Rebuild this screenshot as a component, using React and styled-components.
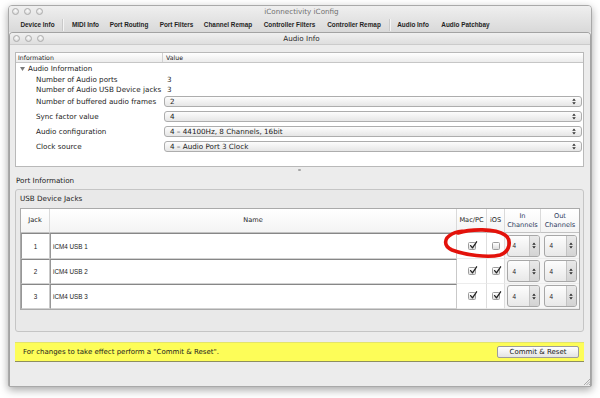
import React from 'react';
import styled, { createGlobalStyle } from 'styled-components';

const Global = createGlobalStyle`
  html, body { margin: 0; padding: 0; background: #fff; }
  body { font-family: "DejaVu Sans", "Liberation Sans", sans-serif; color: #1c1c1c; }
  * { box-sizing: border-box; }
`;

const Page = styled.div`
  position: relative;
  width: 600px;
  height: 398px;
  padding: 5px 8px 0 8px;
  background: #fff;
  overflow: hidden;
`;

const Window = styled.div`
  position: relative;
  width: 584px;
  height: 382px;
  display: flex;
  flex-direction: column;
  background: #ececec;
  border: 1px solid #a9a9a9;
  border-radius: 4px 4px 2px 2px;
  box-shadow: 0 3px 8px rgba(0, 0, 0, 0.35);
`;

const Chrome = styled.div`
  background: linear-gradient(#efefef, #d9d9d9);
  border-radius: 3px 3px 0 0;
`;

const TitleBar = styled.div`
  display: grid;
  grid-template-columns: 1fr auto 1fr;
  align-items: center;
  height: ${(p) => p.$h}px;
  padding-left: 3px;
`;

const Lights = styled.div`
  display: flex;
  gap: 5px;
`;

const Light = styled.span`
  width: 7px;
  height: 7px;
  border-radius: 50%;
  border: 1px solid #acacac;
  background: radial-gradient(circle at 50% 35%, #fbfbfb, #d2d2d2);
`;

const Title = styled.div`
  font-size: 7.2px;
  color: ${(p) => (p.$active ? '#2a2a2a' : '#707070')};
  white-space: nowrap;
`;

const TabBar = styled.div`
  display: flex;
  align-items: center;
  height: 15px;
  padding-left: 4px;
  font-family: "Liberation Sans", Arial, sans-serif;
  font-weight: bold;
  font-size: 6.4px;
  color: #1f1f1f;
`;

const Tab = styled.div`
  width: ${(p) => p.$w}px;
  flex: none;
  text-align: center;
  white-space: nowrap;
`;

const TabSep = styled.div`
  width: 1px;
  height: 12px;
  margin-left: ${(p) => p.$ml || 0}px;
  background: #c9c9c9;
  box-shadow: 1px 0 0 #f4f4f4;
`;

const InnerWindow = styled.div`
  flex: 1;
  display: flex;
  flex-direction: column;
  border: 1px solid #a3a3a3;
  border-bottom: none;
  border-radius: 4px 4px 0 0;
  background: #ececec;
`;

const InnerTitle = styled.div`
  background: linear-gradient(#f0f0f0, #dedede);
  border-bottom: 1px solid #cbcbcb;
  border-radius: 3px 3px 0 0;
`;

const Content = styled.div`
  flex: 1;
  display: flex;
  flex-direction: column;
  padding: 7px 6px 0 5px;
`;

const InfoTable = styled.div`
  height: 115px;
  background: #fff;
  border: 1px solid #b9b9b9;
  display: flex;
  flex-direction: column;
`;

const InfoHead = styled.div`
  display: grid;
  grid-template-columns: 147px 1fr;
  height: 10px;
  background: linear-gradient(#ffffff, #ececec);
  border-bottom: 1px solid #c6c6c6;
  font-size: 6.2px;
  color: #222;
`;

const HeadCell = styled.div`
  display: flex;
  align-items: center;
  padding-left: ${(p) => p.$pl || 2}px;
  border-right: ${(p) => (p.$sep ? '1px solid #d2d2d2' : 'none')};
`;

const InfoRow = styled.div`
  display: grid;
  grid-template-columns: 147px 1fr;
  height: ${(p) => p.$h}px;
  align-items: center;
  font-size: 7.2px;
`;

const LabelCell = styled.div`
  display: flex;
  align-items: center;
  gap: 3px;
  padding-left: ${(p) => p.$pl}px;
  white-space: nowrap;
`;

const ValueCell = styled.div`
  padding-left: 4px;
  padding-right: 1px;
`;

const SelectBox = styled.div`
  height: 11px;
  margin-left: -3px;
  display: flex;
  align-items: center;
  justify-content: space-between;
  padding: 0 5px 0 5px;
  border: 1px solid #adadad;
  border-radius: 3px;
  background: linear-gradient(#fdfdfd, #e6e6e6);
  font-size: 7.2px;
  white-space: nowrap;
`;

const Splitter = styled.div`
  height: 8px;
  display: flex;
  justify-content: center;
  padding-top: 2px;
`;

const SplitDot = styled.span`
  width: 3px;
  height: 2px;
  background: #a5a5a5;
  border-radius: 1px;
`;

const SectionLabel = styled.div`
  height: 11px;
  display: flex;
  align-items: center;
  padding-left: 1px;
  font-size: 7.2px;
`;

const GroupBox = styled.div`
  margin-top: 3px;
  height: 143px;
  border: 1px solid #c5c5c5;
  border-radius: 3px;
  background: #e9e9e9;
  padding: 0 3px 0 4px;
`;

const GroupTitle = styled.div`
  height: 16px;
  margin-bottom: 2px;
  display: flex;
  align-items: center;
  font-size: 7.2px;
`;

const JackGrid = styled.div`
  display: grid;
  grid-template-columns: 29px 407px 30px 18px 36px 38px;
  grid-template-rows: 24px 26px 25px 25px;
  border: 1px solid #aaaaaa;
  background: #fff;
`;

const JHead = styled.div`
  display: flex;
  align-items: center;
  justify-content: center;
  text-align: center;
  line-height: 1.25;
  font-size: 6.6px;
  color: ${(p) => (p.$blue ? '#2c3a5c' : '#222')};
  background: linear-gradient(#ffffff, #f4f4f4);
  border-right: ${(p) => (p.$last ? 'none' : '1px solid #dadada')};
  border-bottom: 1px solid #c2c2c2;
`;

const JField = styled.div`
  display: flex;
  align-items: center;
  justify-content: ${(p) => (p.$center ? 'center' : 'flex-start')};
  padding-left: ${(p) => (p.$center ? 0 : 2)}px;
  background: #fff;
  border-top: 1px solid #878787;
  border-left: 1px solid #979797;
  border-right: 1px solid #c9c9c9;
  border-bottom: 1px solid #d2d2d2;
  font-family: "Liberation Sans", Arial, sans-serif;
  font-size: 6.3px;
  color: #1a1a1a;
`;

const JCheckCell = styled.div`
  display: flex;
  align-items: center;
  justify-content: center;
  background: #fff;
  border-right: 1px solid #dedede;
  border-bottom: 1px solid #ececec;
`;

const CheckBox = styled.span`
  position: relative;
  width: 8px;
  height: 8px;
  border: 1px solid #9c9c9c;
  border-radius: 1.5px;
  background: linear-gradient(#ffffff, #dcdcdc);
`;

const CheckSvg = styled.svg`
  position: absolute;
  left: 0px;
  top: -2px;
  overflow: visible;
`;

const JSpinCell = styled.div`
  display: flex;
  align-items: center;
  justify-content: center;
  background: #f6f6f6;
  border-bottom: 1px solid #ececec;
`;

const Spin = styled.div`
  width: 33px;
  height: 22px;
  display: flex;
  border: 1px solid #a7a7a7;
  border-radius: 3px;
  overflow: hidden;
  background: linear-gradient(#fdfdfd, #e8e8e8);
`;

const SpinValue = styled.div`
  flex: 1;
  display: flex;
  align-items: center;
  padding-left: 5px;
  font-family: "Liberation Sans", Arial, sans-serif;
  font-size: 6.3px;
`;

const SpinArrows = styled.div`
  width: 10px;
  display: flex;
  align-items: center;
  justify-content: center;
  border-left: 1px solid #c3c3c3;
  background: linear-gradient(#e9e9e9, #d3d3d3);
`;

const Notice = styled.div`
  margin-top: 10px;
  height: 20px;
  display: flex;
  align-items: center;
  justify-content: space-between;
  padding: 0 5px 0 8px;
  background: #fdfd58;
  border-top: 1px solid #e4e46a;
  border-bottom: 1px solid #8e8e5e;
  font-size: 7px;
`;

const Button = styled.div`
  width: 82px;
  height: 12px;
  display: flex;
  align-items: center;
  justify-content: center;
  border: 1px solid #9c9c9c;
  border-radius: 2px;
  background: linear-gradient(#ffffff, #e4e4e4);
  font-size: 7px;
  color: #1a1a1a;
`;

const Grip = styled.svg`
  position: absolute;
  right: 1px;
  bottom: 1px;
`;

const Annotation = styled.svg`
  position: absolute;
  left: 0;
  top: 0;
  pointer-events: none;
`;

const UpDown = ({ color = '#333' }) => (
  <svg width="4" height="7" viewBox="0 0 4 7">
    <path d="M0.2 2.8 L2 0.6 L3.8 2.8 Z M0.2 4.2 L3.8 4.2 L2 6.4 Z" fill={color} />
  </svg>
);

const Triangle = () => (
  <svg width="5" height="4" viewBox="0 0 5 4">
    <path d="M0 0 L5 0 L2.5 4 Z" fill="#7a7a7a" />
  </svg>
);

const Check = ({ checked }) => (
  <CheckBox>
    {checked && (
      <CheckSvg width="9" height="9" viewBox="0 0 9 9">
        <path d="M1.6 4.6 L3.5 6.8 L7.6 0.8" stroke="#222" strokeWidth="1.3" fill="none" strokeLinecap="round" strokeLinejoin="round" />
      </CheckSvg>
    )}
  </CheckBox>
);

const SpinBox = ({ value }) => (
  <Spin>
    <SpinValue>{value}</SpinValue>
    <SpinArrows>
      <UpDown color="#2a2a2a" />
    </SpinArrows>
  </Spin>
);

const tabs = [
  { label: 'Device Info', w: 49 },
  { sep: true },
  { label: 'MIDI Info', w: 45 },
  { label: 'Port Routing', w: 42 },
  { label: 'Port Filters', w: 53 },
  { label: 'Channel Remap', w: 50 },
  { label: 'Controller Filters', w: 73 },
  { label: 'Controller Remap', w: 56 },
  { sep: true, ml: 7 },
  { label: 'Audio Info', w: 46 },
  { label: 'Audio Patchbay', w: 59 },
];

const infoRows = [
  { label: 'Number of Audio ports', value: '3', h: 10 },
  { label: 'Number of Audio USB Device jacks', value: '3', h: 10 },
  { label: 'Number of buffered audio frames', select: '2', h: 15 },
  { label: 'Sync factor value', select: '4', h: 15 },
  { label: 'Audio configuration', select: '4 \u2013 44100Hz, 8 Channels, 16bit', h: 15 },
  { label: 'Clock source', select: '4 \u2013 Audio Port 3 Clock', h: 15 },
];

const jacks = [
  { n: 1, name: 'iCM4 USB 1', mac: true, ios: false, inC: 4, outC: 4 },
  { n: 2, name: 'iCM4 USB 2', mac: true, ios: true, inC: 4, outC: 4 },
  { n: 3, name: 'iCM4 USB 3', mac: true, ios: true, inC: 4, outC: 4 },
];

const TrafficLights = () => (
  <Lights>
    <Light />
    <Light />
    <Light />
  </Lights>
);

export default function App() {
  return (
    <Page>
      <Global />
      <Window>
        <Chrome>
          <TitleBar $h={11}>
            <TrafficLights />
            <Title>iConnectivity iConfig</Title>
            <span />
          </TitleBar>
          <TabBar>
            {tabs.map((t, i) =>
              t.sep ? <TabSep key={i} $ml={t.ml} /> : <Tab key={i} $w={t.w}>{t.label}</Tab>
            )}
          </TabBar>
        </Chrome>
        <InnerWindow>
          <InnerTitle>
            <TitleBar $h={11}>
              <TrafficLights />
              <Title $active>Audio Info</Title>
              <span />
            </TitleBar>
          </InnerTitle>
          <Content>
            <InfoTable>
              <InfoHead>
                <HeadCell $sep>Information</HeadCell>
                <HeadCell $pl={3}>Value</HeadCell>
              </InfoHead>
              <InfoRow $h={11}>
                <LabelCell $pl={4}>
                  <Triangle />
                  Audio Information
                </LabelCell>
                <span />
              </InfoRow>
              {infoRows.map((r) => (
                <InfoRow key={r.label} $h={r.h}>
                  <LabelCell $pl={20}>{r.label}</LabelCell>
                  <ValueCell>
                    {r.select ? (
                      <SelectBox>
                        <span>{r.select}</span>
                        <UpDown />
                      </SelectBox>
                    ) : (
                      r.value
                    )}
                  </ValueCell>
                </InfoRow>
              ))}
            </InfoTable>
            <Splitter>
              <SplitDot />
            </Splitter>
            <SectionLabel>Port Information</SectionLabel>
            <GroupBox>
              <GroupTitle>USB Device Jacks</GroupTitle>
              <JackGrid>
                <JHead>Jack</JHead>
                <JHead>Name</JHead>
                <JHead>Mac/PC</JHead>
                <JHead>iOS</JHead>
                <JHead $blue>In<br />Channels</JHead>
                <JHead $blue $last>Out<br />Channels</JHead>
                {jacks.map((j) => (
                  <React.Fragment key={j.n}>
                    <JField $center>{j.n}</JField>
                    <JField>{j.name}</JField>
                    <JCheckCell>
                      <Check checked={j.mac} />
                    </JCheckCell>
                    <JCheckCell>
                      <Check checked={j.ios} />
                    </JCheckCell>
                    <JSpinCell>
                      <SpinBox value={j.inC} />
                    </JSpinCell>
                    <JSpinCell>
                      <SpinBox value={j.outC} />
                    </JSpinCell>
                  </React.Fragment>
                ))}
              </JackGrid>
            </GroupBox>
            <Notice>
              <span>For changes to take effect perform a "Commit &amp; Reset".</span>
              <Button>Commit &amp; Reset</Button>
            </Notice>
          </Content>
        </InnerWindow>
        <Grip width="7" height="7" viewBox="0 0 7 7">
          <path d="M7 1 L1 7 M7 3.5 L3.5 7 M7 6 L6 7" stroke="#9a9a9a" strokeWidth="0.8" />
        </Grip>
      </Window>
      <Annotation width="600" height="398" viewBox="0 0 600 398">
        <path
          d="M458 233 C470 229, 495 228, 505 235 C512 240, 510 252, 500 255 C488 258, 465 255, 452 250 C443 246, 444 238, 452 234 C456 232, 460 231, 466 231"
          stroke="#e3120b"
          strokeWidth="3.6"
          fill="none"
          strokeLinecap="round"
        />
      </Annotation>
    </Page>
  );
}
